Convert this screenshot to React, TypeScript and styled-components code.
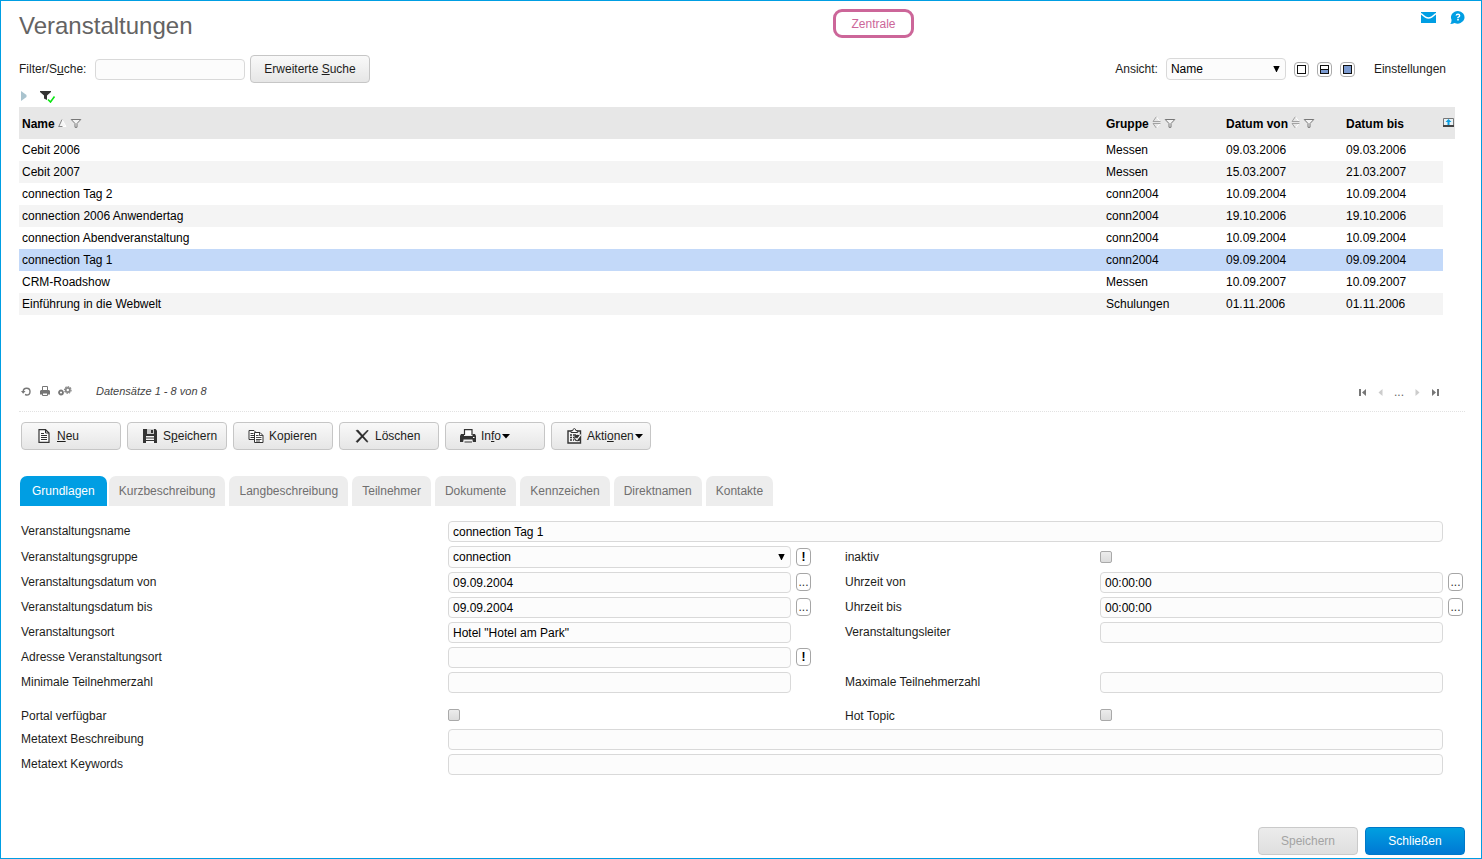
import React, { ReactNode, useState } from "react";
import styled, { createGlobalStyle, css } from "styled-components";

const BLUE = "#009ee3";
const FONT = `"Liberation Sans", Arial, Helvetica, sans-serif`;

const GlobalStyle = createGlobalStyle`
  *, *::before, *::after { box-sizing: border-box; }
  body { margin: 0; background: #fff; color: #1d1d1b; font: 12px/14px ${FONT}; }
  button, input, select { font: 12px/14px ${FONT}; color: #000; margin: 0; }
  svg { display: block; flex: none; }
`;

/* ---------- frame and header ---------- */

const Frame = styled.div`
  display: flex;
  flex-direction: column;
  min-height: 100vh;
  padding: 0 16px 3px 18px;
  border: 1px solid ${BLUE};
`;

const Header = styled.header`
  display: grid;
  grid-template-columns: 814fr auto 551fr;
  align-items: start;
  height: 54px;
  padding-top: 8px;
`;

const Title = styled.h1`
  margin: 0;
  font-size: 24px;
  line-height: 34px;
  font-weight: 400;
  color: #646363;
`;

const Badge = styled.button`
  height: 29px;
  width: 81px;
  padding: 0;
  border: 3px solid #cc6699;
  border-radius: 9px;
  background: #fff;
  color: #cc6699;
`;

const HeaderIcons = styled.div`
  display: flex;
  justify-content: flex-end;
  gap: 14px;
`;

const IconButton = styled.button`
  display: flex;
  align-items: center;
  justify-content: center;
  padding: 0;
  border: 0;
  background: none;
`;

/* ---------- controls ---------- */

const field = css`
  width: 100%;
  height: 21px;
  padding: 1px 4px 0;
  border: 1px solid #d9d9d9;
  border-radius: 4px;
  background: #fcfcfc;
  outline: none;
`;

const TextInput = styled.input`
  ${field}
`;

const SelectBox = styled.div<{ $width?: string }>`
  position: relative;
  width: ${(p) => p.$width ?? "100%"};
  select {
    ${field}
    display: block;
    height: 22px;
    padding: 0 20px 0 4px;
    appearance: none;
  }
  svg {
    position: absolute;
    right: 6px;
    top: 8px;
    pointer-events: none;
  }
`;

const Button = styled.button<{ $primary?: boolean; $tool?: boolean; $wide?: boolean }>`
  display: flex;
  align-items: center;
  justify-content: ${(p) => (p.$tool ? "flex-start" : "center")};
  min-width: ${(p) => (p.$wide ? 120 : 100)}px;
  height: 28px;
  padding: 0 ${(p) => (p.$tool ? 0 : 12)}px 0 ${(p) => (p.$tool ? 14 : 12)}px;
  border: 1px solid ${(p) => (p.$primary ? "#0079c8" : "#c6c6c6")};
  border-radius: 4px;
  background: ${(p) =>
    p.$primary ? "linear-gradient(#009fe0, #0078d4)" : "linear-gradient(#f9f9f9, #e6e6e6)"};
  color: ${(p) => (p.$primary ? "#fff" : "#1d1d1b")};
  white-space: pre;
  &:disabled {
    color: #a3a3a3;
    background: linear-gradient(#ececec, #dfdfdf);
    border-color: #cacaca;
  }
`;

const IconSlot = styled.span`
  display: flex;
  justify-content: center;
  width: 16px;
  margin-right: 5px;
`;

const MiniButton = styled.button<{ $strong?: boolean }>`
  display: flex;
  align-items: center;
  justify-content: center;
  width: 15px;
  height: 18px;
  padding: 0;
  border: 1px solid #a6a6a6;
  border-radius: 4px;
  background: #fff;
  color: ${(p) => (p.$strong ? "#000" : "#333")};
  font-weight: ${(p) => (p.$strong ? 700 : 400)};
`;

const ViewButton = styled(MiniButton)`
  height: 15px;
  border-color: #ababab;
`;

const Checkbox = styled.input.attrs({ type: "checkbox" })`
  appearance: none;
  display: block;
  width: 12px;
  height: 12px;
  border: 1px solid #a9a9a9;
  border-radius: 2px;
  background: linear-gradient(#ececec, #dcdcdc);
  &:checked {
    background: ${BLUE};
  }
`;

/* ---------- filter bar ---------- */

const FilterBar = styled.div`
  display: flex;
  align-items: center;
  height: 28px;
  padding-right: 19px;
`;

const SearchLabel = styled.label`
  width: 76px;
`;

const SearchField = styled.div`
  width: 150px;
  margin-right: 5px;
`;

const ViewControls = styled.div`
  display: flex;
  align-items: center;
  gap: 8px;
  margin-left: auto;
`;

const SettingsButton = styled(IconButton)`
  margin-left: 11px;
  color: #1d1d1b;
`;

const FilterState = styled.div`
  display: flex;
  align-items: center;
  gap: 13px;
  height: 24px;
  padding: 2px 2px 0;
`;

/* ---------- table ---------- */

const ListArea = styled.div`
  min-height: 273px;
  padding-right: 10px;
`;

const Table = styled.table`
  width: 100%;
  table-layout: fixed;
  border-collapse: collapse;
  color: #000;
  th {
    height: 32px;
    padding: 1px 0 0 3px;
    background: #e7e7e7;
    text-align: left;
  }
  th:last-child {
    padding: 0 0 2px;
  }
  td {
    height: 22px;
    padding: 0 3px;
  }
`;

const Row = styled.tr<{ $selected?: boolean }>`
  &:nth-child(even) td {
    background: #f4f4f4;
  }
  && td {
    ${(p) => p.$selected && "background: #c3d9f9;"}
  }
`;

const Col = styled.col<{ $width?: number }>`
  width: ${(p) => (p.$width ? `${p.$width}px` : "auto")};
`;

const HeadCell = styled.div`
  display: flex;
  align-items: center;
  gap: 3px;
  svg {
    margin-bottom: 2px;
  }
`;

const ListFooter = styled.div`
  display: flex;
  align-items: center;
  height: 22px;
  margin-bottom: 9px;
  padding: 0 25px 0 2px;
`;

const FooterTools = styled.div`
  display: flex;
  align-items: center;
  gap: 8px;
  width: 75px;
`;

const RecordCount = styled.span`
  font-size: 11px;
  font-style: italic;
  color: #444;
`;

const Pager = styled.nav`
  display: flex;
  align-items: center;
  gap: 11px;
  margin-left: auto;
  padding-top: 2px;
  color: #666;
`;

const Divider = styled.hr`
  width: 100%;
  margin: 0 0 10px;
  border: 0;
  border-top: 1px dotted #e2e2e2;
`;

/* ---------- toolbar, tabs, form ---------- */

const Toolbar = styled.div`
  display: flex;
  gap: 6px;
  padding-left: 2px;
`;

const Tabs = styled.div`
  display: flex;
  margin: 26px 0 15px;
  padding-left: 1px;
`;

const Tab = styled.button<{ $active: boolean }>`
  height: 30px;
  margin: 0 ${(p) => (p.$active ? 0 : 2)}px;
  padding: 0 ${(p) => (p.$active ? 12 : 10)}px;
  border: 0;
  border-radius: 7px 7px 0 0;
  background: ${(p) => (p.$active ? BLUE : "#ededed")};
  color: ${(p) => (p.$active ? "#fff" : "#706f6f")};
`;

const Form = styled.form`
  display: grid;
  grid-template-columns: 427fr 343fr 54px 255fr 343fr 20px;
  row-gap: 4px;
  align-items: center;
  padding: 0 2px;
`;

const Label = styled.label<{ $low?: boolean }>`
  padding: ${(p) => (p.$low ? "10px 0 0" : "0 0 1px")};
`;

const LeftLabel = styled(Label)`
  grid-column: 1;
`;

const RightLabel = styled(Label)`
  grid-column: 4;
`;

const Control = styled.div<{ $col: number; $span?: number; $low?: boolean }>`
  grid-column: ${(p) => p.$col} / span ${(p) => p.$span ?? 1};
  display: flex;
  align-items: center;
  padding: ${(p) => (p.$low ? "12px 0 4px" : 0)};
`;

const Side = styled.div`
  padding: 0 0 1px 5px;
`;

const Actions = styled.footer`
  display: flex;
  justify-content: flex-end;
  gap: 7px;
  margin-top: auto;
  padding-top: 20px;
`;

/* ---------- icons ---------- */

const MailIcon = () => (
  <svg width="15" height="17" viewBox="0 0 15 17">
    <path d="M0 3h15v11H0z" fill={BLUE} />
    <path d="M0 4.500Q4.500 9 7.500 9T15 4.500" fill="none" stroke="#fff" strokeWidth="1.500" />
  </svg>
);

const HelpIcon = () => (
  <svg width="15" height="17" viewBox="0 0 15 17">
    <path d="M8 2a6.800 6.300 0 1 1-3.400 11.900Q2.500 15 .2 15q1.500-1.600 1.300-4.200A6.800 6.300 0 0 1 8 2z" fill={BLUE} />
    <path d="M6.200 6.500Q6.400 5.200 8 5.200T9.700 6.700Q9.700 7.600 8 8.500v.8" fill="none" stroke="#fff" strokeWidth="1.400" />
    <path d="M7.200 10h1.600v1.500H7.200z" fill="#fff" />
  </svg>
);

const SelectArrow = () => (
  <svg width="7" height="6" viewBox="0 0 7 6">
    <path d="M.3 0h6.400L3.800 6h-.6z" fill="#000" />
  </svg>
);

const Caret = () => (
  <svg width="9" height="5" viewBox="0 0 9 5">
    <path d="M1 0h8L5 4.500z" fill="#000" />
  </svg>
);

const ViewIcon = ({ fill }: { fill: "none" | "half" | "full" }) => (
  <svg width="9" height="9" viewBox="0 0 9 9" shapeRendering="crispEdges">
    <path d="M.5.5h8v8h-8z" fill={fill === "full" ? "#7b9ad0" : "#fff"} stroke="#111" />
    {fill === "half" && <path d="M1 5h7v3H1z" fill="#7b9ad0" />}
    {fill === "half" && <path d="M1 4h7v1H1z" fill="#111" />}
  </svg>
);

const ExpandIcon = () => (
  <svg width="6" height="10" viewBox="0 0 6 10">
    <path d="M0 0l5.500 4v2L0 10z" fill="#a9c3ce" />
  </svg>
);

const FilterActiveIcon = () => (
  <svg width="16" height="13" viewBox="0 0 16 13">
    <path d="M0 1h11v1L7 5.500V10L4 8.500v-3L0 2z" fill="#333" />
    <path d="M8 9.500l2.500 2.500L14.500 6.500" fill="none" stroke="#0be512" strokeWidth="1.600" />
  </svg>
);

const FunnelIcon = () => (
  <svg width="12" height="10" viewBox="0 0 12 10">
    <path d="M1.200 1.500h9.600L7 5.500v3.800H5V5.500z" fill="#f4f4f4" stroke="#777" />
  </svg>
);

const SortedIcon = () => (
  <svg width="9" height="10" viewBox="0 0 9 10">
    <path d="M4 1.500L8 8.500H1" fill="#f6f6f6" stroke="#fff" />
    <path d="M.8 8.500L4 1.500M.5 8.500h4" fill="none" stroke="#888" />
  </svg>
);

const SortIcon = () => (
  <svg width="9" height="13" viewBox="0 0 9 13">
    <path d="M4.500 1L8 5.500M8 7.500L4.500 12" fill="none" stroke="#fff" />
    <path d="M4.300.8L1 5.500h7.500M1 7.500h7.500M1 7.500l3.300 4.500" fill="none" stroke="#9a9a9a" strokeWidth=".9" />
  </svg>
);

const ExportIcon = () => (
  <svg width="11" height="9" viewBox="0 0 11 9">
    <path d="M.5.5h10v8H.5z" fill="#e9f2f6" stroke="#777" />
    <path d="M0 7h11v2H0z" fill="#444" />
    <path d="M5.500 1L8.500 4H6.500v3h-2V4h-2z" fill="#0a9de0" />
  </svg>
);

const RefreshIcon = () => (
  <svg width="11" height="11" viewBox="0 0 11 11">
    <path d="M2.200 5.500A3.400 3.400 0 1 1 5.500 9L4 8.500" fill="none" stroke="#777" strokeWidth="1.400" />
    <path d="M0 5h4.500L2.200 7.700z" fill="#777" />
  </svg>
);

const SmallPrinterIcon = () => (
  <svg width="10" height="10" viewBox="0 0 10 10">
    <path d="M2.500 4.500v-4h5v4" fill="#fff" stroke="#777" />
    <path d="M0 5L1 4h8l1 1v3.500H0z" fill="#777" />
    <path d="M2.500 7h5v2.500h-5z" fill="#fff" stroke="#777" />
  </svg>
);

const GearsIcon = () => (
  <svg width="14" height="11" viewBox="0 0 14 11">
    <circle cx="3" cy="6.500" r="2" fill="none" stroke="#777" strokeWidth="1.800" />
    <circle cx="9.800" cy="4" r="3.300" fill="none" stroke="#888" strokeWidth="1.200" strokeDasharray="1.500 1" />
    <circle cx="9.800" cy="4" r="2.100" fill="none" stroke="#888" strokeWidth="1.800" />
  </svg>
);

const PageIcon = ({ end, flip }: { end?: boolean; flip?: boolean }) => (
  <svg width={end ? 9 : 5} height="9" viewBox={end ? "0 0 9 9" : "0 0 5 9"}>
    <g transform={flip ? `translate(${end ? 9 : 5} 0) scale(-1 1)` : undefined}>
      {end ? (
        <path d="M1 1h2v7H1zM8 1v7L4 4.500z" fill="#777" />
      ) : (
        <path d="M4.500 1v7L.5 4.500z" fill="#ccc" />
      )}
    </g>
  </svg>
);

const NewIcon = () => (
  <svg width="12" height="14" viewBox="0 0 12 14">
    <path d="M1 .7h6.500L11 4v9.300H1z" fill="#fff" stroke="#333" strokeWidth="1.200" />
    <path d="M7.500.5V4H11M3 4.500h3M3 6.500h6M3 8.500h6M3 10.500h6" fill="none" stroke="#333" />
  </svg>
);

const SaveIcon = () => (
  <svg width="14" height="14" viewBox="0 0 14 14">
    <path d="M0 0h12.500L14 1.500V14H0z" fill="#333" />
    <path d="M4 0h7v5H4z" fill="#c9c9c9" />
    <path d="M8 1h2v3H8z" fill="#333" />
    <path d="M3 7h8v7H3z" fill="#f4f4f4" />
    <path d="M3 9h8M3 11.500h8" stroke="#333" />
  </svg>
);

const CopyIcon = () => (
  <svg width="16" height="14" viewBox="0 0 16 14">
    <path d="M1 1.500h5L8.500 4v6.500H1z" fill="#fff" stroke="#333" />
    <path d="M2.500 4.500h3M2.500 6.500h4M2.500 8.500h4" stroke="#333" />
    <path d="M6.500 3.500h5.500l3 3v7H6.500z" fill="#fff" stroke="#333" />
    <path d="M11.500 3.500v3H15M8 6.500h2.500M8 8.500h5.500M8 10.500h5.500M8 12h4" fill="none" stroke="#333" strokeWidth=".9" />
  </svg>
);

const DeleteIcon = () => (
  <svg width="14" height="14" viewBox="0 0 14 14">
    <path d="M1 1.500l2-.5 10 11.500-1 .8zM12.500 1l.8.8L2.500 13.500 1 12.500z" fill="#2a2a2a" stroke="#2a2a2a" strokeWidth=".5" />
  </svg>
);

const PrinterIcon = () => (
  <svg width="16" height="14" viewBox="0 0 16 14">
    <path d="M4.500 6V.7h7.500V6" fill="#fff" stroke="#333" strokeWidth="1.200" />
    <path d="M1 5h3v2h8.500V5H15l1 2v6H0V7z" fill="#333" />
    <path d="M3.500 10.500h9L13 14H3z" fill="#f0f0f0" />
    <path d="M4.500 12.500h7.500v1H4.500z" fill="#333" />
    <path d="M13 8h1.500v1H13z" fill="#fff" />
  </svg>
);

const ActionsIcon = () => (
  <svg width="15" height="16" viewBox="0 0 15 16">
    <path d="M1 3h12.500v12H1z" fill="#f4f4f4" stroke="#333" strokeWidth="1.400" />
    <path d="M4 4.500V2.700h1.700Q6 .6 7.300.6T9 2.700h1.700v1.800z" fill="#fff" stroke="#333" />
    <path d="M3 7h2M3 9.500h2M3 12h2M6 7h3M6 9.500h1M6 12h1" stroke="#333" strokeWidth="1.300" />
    <circle cx="10.500" cy="10" r="3.300" fill="#333" />
    <path d="M8.500 10l1.500 1.500L14 6.500" fill="none" stroke="#fff" strokeWidth="1.200" />
  </svg>
);

/* ---------- data ---------- */

const EVENTS = [
  ["Cebit 2006", "Messen", "09.03.2006", "09.03.2006"],
  ["Cebit 2007", "Messen", "15.03.2007", "21.03.2007"],
  ["connection Tag 2", "conn2004", "10.09.2004", "10.09.2004"],
  ["connection 2006 Anwendertag", "conn2004", "19.10.2006", "19.10.2006"],
  ["connection Abendveranstaltung", "conn2004", "10.09.2004", "10.09.2004"],
  ["connection Tag 1", "conn2004", "09.09.2004", "09.09.2004"],
  ["CRM-Roadshow", "Messen", "10.09.2007", "10.09.2007"],
  ["Einführung in die Webwelt", "Schulungen", "01.11.2006", "01.11.2006"],
];

const TABS = [
  "Grundlagen",
  "Kurzbeschreibung",
  "Langbeschreibung",
  "Teilnehmer",
  "Dokumente",
  "Kennzeichen",
  "Direktnamen",
  "Kontakte",
];

const TOOLS: { icon: ReactNode; label: ReactNode; menu?: boolean }[] = [
  { icon: <NewIcon />, label: <><u>N</u>eu</> },
  { icon: <SaveIcon />, label: <>S<u>p</u>eichern</> },
  { icon: <CopyIcon />, label: "Kopieren" },
  { icon: <DeleteIcon />, label: "Löschen" },
  { icon: <PrinterIcon />, label: <>In<u>f</u>o</>, menu: true },
  { icon: <ActionsIcon />, label: <>Akti<u>o</u>nen</>, menu: true },
];

type FieldProps = { id: string; label: string; value?: string; right?: boolean; wide?: boolean; side?: string };

const Field = ({ id, label, value = "", right, wide, side }: FieldProps) => {
  const Caption = right ? RightLabel : LeftLabel;
  const col = right ? 5 : 2;
  return (
    <>
      <Caption htmlFor={id}>{label}</Caption>
      <Control $col={col} $span={wide ? 4 : 1}>
        <TextInput id={id} defaultValue={value} />
      </Control>
      {side && (
        <Side>
          <MiniButton type="button" $strong={side === "!"} aria-label={`${label} auswählen`}>
            {side}
          </MiniButton>
        </Side>
      )}
    </>
  );
};

export default function App() {
  const [tab, setTab] = useState(TABS[0]);
  const [selected, setSelected] = useState(5);

  return (
    <Frame>
      <GlobalStyle />
      <Header>
        <Title>Veranstaltungen</Title>
        <Badge>Zentrale</Badge>
        <HeaderIcons>
          <IconButton aria-label="Nachrichten"><MailIcon /></IconButton>
          <IconButton aria-label="Hilfe"><HelpIcon /></IconButton>
        </HeaderIcons>
      </Header>

      <FilterBar>
        <SearchLabel htmlFor="search">Filter/S<u>u</u>che:</SearchLabel>
        <SearchField><TextInput id="search" /></SearchField>
        <Button $wide>Erweiterte <u>S</u>uche</Button>
        <ViewControls>
          <label htmlFor="view">Ansicht:</label>
          <SelectBox $width="120px">
            <select id="view"><option>Name</option></select>
            <SelectArrow />
          </SelectBox>
          <ViewButton aria-label="Nur Liste"><ViewIcon fill="none" /></ViewButton>
          <ViewButton aria-label="Liste und Details"><ViewIcon fill="half" /></ViewButton>
          <ViewButton aria-label="Nur Details"><ViewIcon fill="full" /></ViewButton>
          <SettingsButton>Einstellungen</SettingsButton>
        </ViewControls>
      </FilterBar>

      <FilterState>
        <IconButton aria-label="Aufklappen"><ExpandIcon /></IconButton>
        <IconButton aria-label="Filter aktiv"><FilterActiveIcon /></IconButton>
      </FilterState>

      <ListArea>
        <Table>
          <colgroup>
            <Col />
            <Col $width={120} />
            <Col $width={120} />
            <Col $width={100} />
            <Col $width={12} />
          </colgroup>
          <thead>
            <tr>
              <th><HeadCell>Name<SortedIcon /><FunnelIcon /></HeadCell></th>
              <th><HeadCell>Gruppe<SortIcon /><FunnelIcon /></HeadCell></th>
              <th><HeadCell>Datum von<SortIcon /><FunnelIcon /></HeadCell></th>
              <th>Datum bis</th>
              <th><IconButton aria-label="Exportieren"><ExportIcon /></IconButton></th>
            </tr>
          </thead>
          <tbody>
            {EVENTS.map((cells, i) => (
              <Row key={cells[0]} $selected={i === selected} onClick={() => setSelected(i)}>
                {cells.map((cell, j) => <td key={j}>{cell}</td>)}
              </Row>
            ))}
          </tbody>
        </Table>
      </ListArea>

      <ListFooter>
        <FooterTools>
          <IconButton aria-label="Aktualisieren"><RefreshIcon /></IconButton>
          <IconButton aria-label="Drucken"><SmallPrinterIcon /></IconButton>
          <IconButton aria-label="Optionen"><GearsIcon /></IconButton>
        </FooterTools>
        <RecordCount>Datensätze 1 - 8 von 8</RecordCount>
        <Pager>
          <IconButton aria-label="Erste Seite"><PageIcon end /></IconButton>
          <IconButton aria-label="Vorige Seite"><PageIcon /></IconButton>
          <span>...</span>
          <IconButton aria-label="Nächste Seite"><PageIcon flip /></IconButton>
          <IconButton aria-label="Letzte Seite"><PageIcon end flip /></IconButton>
        </Pager>
      </ListFooter>
      <Divider />

      <Toolbar>
        {TOOLS.map((tool, i) => (
          <Button key={i} $tool>
            <IconSlot>{tool.icon}</IconSlot>
            <span>{tool.label}</span>
            {tool.menu && <Caret />}
          </Button>
        ))}
      </Toolbar>

      <Tabs role="tablist">
        {TABS.map((name) => (
          <Tab key={name} role="tab" aria-selected={name === tab} $active={name === tab} onClick={() => setTab(name)}>
            {name}
          </Tab>
        ))}
      </Tabs>

      <Form>
        <Field id="name" label="Veranstaltungsname" value="connection Tag 1" wide />

        <LeftLabel htmlFor="group">Veranstaltungsgruppe</LeftLabel>
        <Control $col={2}>
          <SelectBox>
            <select id="group"><option>connection</option></select>
            <SelectArrow />
          </SelectBox>
        </Control>
        <Side><MiniButton type="button" $strong aria-label="Gruppe öffnen">!</MiniButton></Side>
        <RightLabel htmlFor="inactive">inaktiv</RightLabel>
        <Control $col={5}><Checkbox id="inactive" /></Control>

        <Field id="dateFrom" label="Veranstaltungsdatum von" value="09.09.2004" side="..." />
        <Field id="timeFrom" label="Uhrzeit von" value="00:00:00" side="..." right />
        <Field id="dateTo" label="Veranstaltungsdatum bis" value="09.09.2004" side="..." />
        <Field id="timeTo" label="Uhrzeit bis" value="00:00:00" side="..." right />
        <Field id="place" label="Veranstaltungsort" value={'Hotel "Hotel am Park"'} />
        <Field id="leader" label="Veranstaltungsleiter" right />
        <Field id="address" label="Adresse Veranstaltungsort" side="!" />
        <Field id="min" label="Minimale Teilnehmerzahl" />
        <Field id="max" label="Maximale Teilnehmerzahl" right />

        <LeftLabel htmlFor="portal" $low>Portal verfügbar</LeftLabel>
        <Control $col={2} $low><Checkbox id="portal" /></Control>
        <RightLabel htmlFor="hot" $low>Hot Topic</RightLabel>
        <Control $col={5} $low><Checkbox id="hot" /></Control>

        <Field id="metaText" label="Metatext Beschreibung" wide />
        <Field id="metaKeys" label="Metatext Keywords" wide />
      </Form>

      <Actions>
        <Button disabled>Speichern</Button>
        <Button $primary>Schließen</Button>
      </Actions>
    </Frame>
  );
}
